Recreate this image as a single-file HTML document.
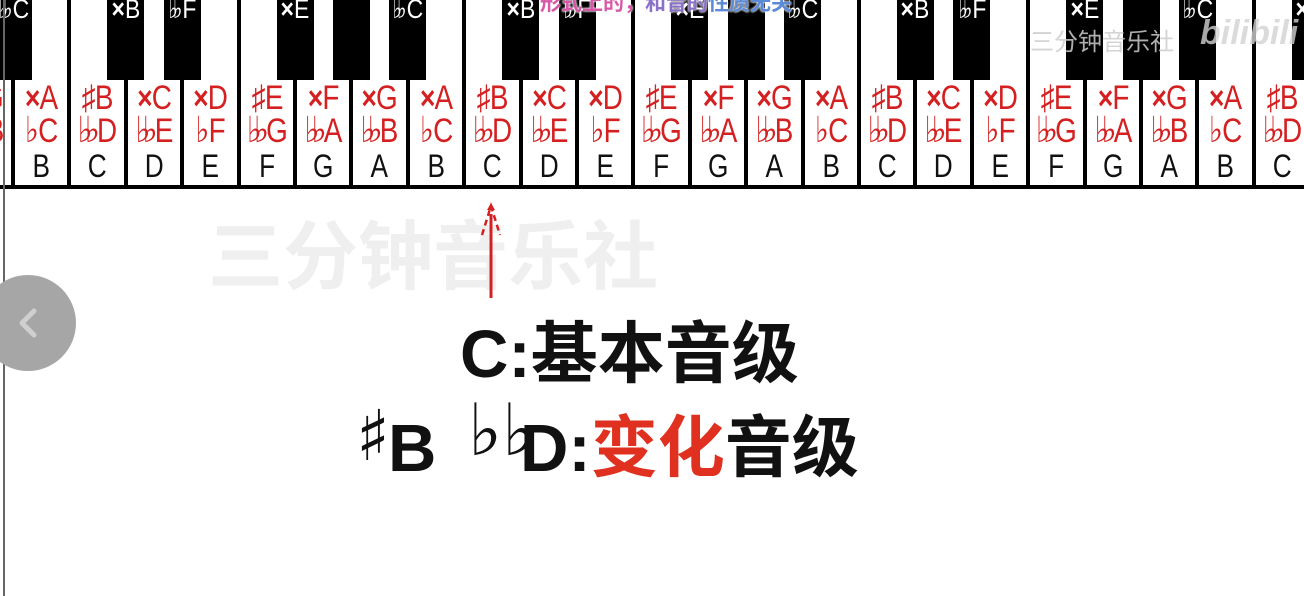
<!DOCTYPE html>
<html><head><meta charset="utf-8"><style>
*{margin:0;padding:0;box-sizing:border-box}
body{width:1304px;height:596px;overflow:hidden;background:#fff;position:relative;font-family:"Liberation Sans","Noto Sans CJK SC",sans-serif}
.d{position:absolute;top:0;height:188px;width:4px;background:#000}
.w{position:absolute;top:82px;width:56.4px;height:104px;text-align:center;color:#d42020}
.w .r{font-size:34px;line-height:33px;height:33px;transform:scaleX(.82);white-space:nowrap;letter-spacing:-1px}
.w .n{color:#111;font-size:32px;line-height:36px;transform:scaleX(.82)}
.x{font-weight:bold;font-size:32px}
.f{font-family:"DejaVu Sans",sans-serif;font-size:36px;letter-spacing:-9px;margin-right:7px;line-height:30px;display:inline-block;transform:scaleX(1.1)}
.f1{font-family:"DejaVu Sans",sans-serif;font-size:36px;line-height:30px}
.b{position:absolute;top:0;width:37px;height:80px;background:#000;color:#fff;font-size:27px;line-height:18px;text-align:center;overflow:hidden;white-space:nowrap}
.b span{display:inline-block;transform:scaleX(.85);margin-top:-4px}
.b .f{font-size:28px;letter-spacing:-7px;margin-right:5px;line-height:18px}
</style></head><body>
<div class="w" style="left:-43.4px"><div class="r"><span class="x">×</span>G</div><div class="r"><span class="f">♭♭</span>B</div><div class="n">A</div></div>
<div class="w" style="left:13px"><div class="r"><span class="x">×</span>A</div><div class="r"><span class="f1">♭</span>C</div><div class="n">B</div></div>
<div class="w" style="left:69.4px"><div class="r">♯B</div><div class="r"><span class="f">♭♭</span>D</div><div class="n">C</div></div>
<div class="w" style="left:125.8px"><div class="r"><span class="x">×</span>C</div><div class="r"><span class="f">♭♭</span>E</div><div class="n">D</div></div>
<div class="w" style="left:182.2px"><div class="r"><span class="x">×</span>D</div><div class="r"><span class="f1">♭</span>F</div><div class="n">E</div></div>
<div class="w" style="left:238.6px"><div class="r">♯E</div><div class="r"><span class="f">♭♭</span>G</div><div class="n">F</div></div>
<div class="w" style="left:295px"><div class="r"><span class="x">×</span>F</div><div class="r"><span class="f">♭♭</span>A</div><div class="n">G</div></div>
<div class="w" style="left:351.4px"><div class="r"><span class="x">×</span>G</div><div class="r"><span class="f">♭♭</span>B</div><div class="n">A</div></div>
<div class="w" style="left:407.8px"><div class="r"><span class="x">×</span>A</div><div class="r"><span class="f1">♭</span>C</div><div class="n">B</div></div>
<div class="w" style="left:464.2px"><div class="r">♯B</div><div class="r"><span class="f">♭♭</span>D</div><div class="n">C</div></div>
<div class="w" style="left:520.6px"><div class="r"><span class="x">×</span>C</div><div class="r"><span class="f">♭♭</span>E</div><div class="n">D</div></div>
<div class="w" style="left:577px"><div class="r"><span class="x">×</span>D</div><div class="r"><span class="f1">♭</span>F</div><div class="n">E</div></div>
<div class="w" style="left:633.4px"><div class="r">♯E</div><div class="r"><span class="f">♭♭</span>G</div><div class="n">F</div></div>
<div class="w" style="left:689.8px"><div class="r"><span class="x">×</span>F</div><div class="r"><span class="f">♭♭</span>A</div><div class="n">G</div></div>
<div class="w" style="left:746.2px"><div class="r"><span class="x">×</span>G</div><div class="r"><span class="f">♭♭</span>B</div><div class="n">A</div></div>
<div class="w" style="left:802.6px"><div class="r"><span class="x">×</span>A</div><div class="r"><span class="f1">♭</span>C</div><div class="n">B</div></div>
<div class="w" style="left:859px"><div class="r">♯B</div><div class="r"><span class="f">♭♭</span>D</div><div class="n">C</div></div>
<div class="w" style="left:915.4px"><div class="r"><span class="x">×</span>C</div><div class="r"><span class="f">♭♭</span>E</div><div class="n">D</div></div>
<div class="w" style="left:971.8px"><div class="r"><span class="x">×</span>D</div><div class="r"><span class="f1">♭</span>F</div><div class="n">E</div></div>
<div class="w" style="left:1028.2px"><div class="r">♯E</div><div class="r"><span class="f">♭♭</span>G</div><div class="n">F</div></div>
<div class="w" style="left:1084.6px"><div class="r"><span class="x">×</span>F</div><div class="r"><span class="f">♭♭</span>A</div><div class="n">G</div></div>
<div class="w" style="left:1141px"><div class="r"><span class="x">×</span>G</div><div class="r"><span class="f">♭♭</span>B</div><div class="n">A</div></div>
<div class="w" style="left:1197.4px"><div class="r"><span class="x">×</span>A</div><div class="r"><span class="f1">♭</span>C</div><div class="n">B</div></div>
<div class="w" style="left:1253.8px"><div class="r">♯B</div><div class="r"><span class="f">♭♭</span>D</div><div class="n">C</div></div>
<div class="d" style="left:11px"></div><div class="d" style="left:67.4px"></div><div class="d" style="left:123.8px"></div><div class="d" style="left:180.2px"></div><div class="d" style="left:236.6px"></div><div class="d" style="left:293px"></div><div class="d" style="left:349.4px"></div><div class="d" style="left:405.8px"></div><div class="d" style="left:462.2px"></div><div class="d" style="left:518.6px"></div><div class="d" style="left:575px"></div><div class="d" style="left:631.4px"></div><div class="d" style="left:687.8px"></div><div class="d" style="left:744.2px"></div><div class="d" style="left:800.6px"></div><div class="d" style="left:857px"></div><div class="d" style="left:913.4px"></div><div class="d" style="left:969.8px"></div><div class="d" style="left:1026.2px"></div><div class="d" style="left:1082.6px"></div><div class="d" style="left:1139px"></div><div class="d" style="left:1195.4px"></div><div class="d" style="left:1251.8px"></div>
<div style="position:absolute;left:0;top:185px;width:1304px;height:4px;background:#000"></div>
<div class="b" style="left:-5.5px"><span><span class="f">♭♭</span>C</span></div>
<div class="b" style="left:107.3px"><span><b>×</b>B</span></div>
<div class="b" style="left:163.7px"><span><span class="f">♭♭</span>F</span></div>
<div class="b" style="left:276.5px"><span><b>×</b>E</span></div>
<div class="b" style="left:332.9px"></div>
<div class="b" style="left:389.3px"><span><span class="f">♭♭</span>C</span></div>
<div class="b" style="left:502.1px"><span><b>×</b>B</span></div>
<div class="b" style="left:558.5px"><span><span class="f">♭♭</span>F</span></div>
<div class="b" style="left:671.3px"><span><b>×</b>E</span></div>
<div class="b" style="left:727.7px"></div>
<div class="b" style="left:784.1px"><span><span class="f">♭♭</span>C</span></div>
<div class="b" style="left:896.9px"><span><b>×</b>B</span></div>
<div class="b" style="left:953.3px"><span><span class="f">♭♭</span>F</span></div>
<div class="b" style="left:1066.1px"><span><b>×</b>E</span></div>
<div class="b" style="left:1122.5px"></div>
<div class="b" style="left:1178.9px"><span><span class="f">♭♭</span>C</span></div>
<div class="b" style="left:1291.5px"><span><b>×</b>B</span></div>
<div style="position:absolute;left:540px;top:-13px;font-size:21px;font-weight:bold;white-space:nowrap;text-shadow:0 0 2px #fff,0 0 2px #fff"><span style="color:#d858a8">形式上的，</span><span style="color:#8a70c8">和音的</span><span style="color:#5a8ad8">性质无关</span></div>
<div style="position:absolute;left:1030px;top:22px;font-size:24px;color:rgba(205,205,205,.85);white-space:nowrap">三分钟音乐社</div>
<div style="position:absolute;left:1200px;top:14px;font-size:34px;font-weight:bold;color:rgba(210,210,210,.8);font-style:italic">bilibili</div>
<div style="position:absolute;left:3px;top:0;width:2px;height:596px;background:#666"></div>
<div style="position:absolute;left:208px;top:196px;font-size:75px;font-weight:bold;color:#efefef;white-space:nowrap">三分钟音乐社</div>
<svg style="position:absolute;left:470px;top:200px" width="40" height="102"><line x1="21" y1="14" x2="21" y2="98" stroke="#d42020" stroke-width="3"/><path d="M12 35 L21 6 L30 35" fill="none" stroke="#d42020" stroke-width="2.5" stroke-dasharray="6,4"/><path d="M17 10 L21 3 L25 10Z" fill="#d42020"/></svg>
<div style="position:absolute;left:-20px;top:275px;width:96px;height:96px;border-radius:50%;background:#a6a6a6"></div>
<svg style="position:absolute;left:14px;top:305px" width="30" height="36"><path d="M20 6 L8 18 L20 30" fill="none" stroke="#cfcfcf" stroke-width="5" stroke-linecap="round" stroke-linejoin="round"/></svg>
<div style="position:absolute;left:460px;top:318px;font-size:67px;font-weight:bold;color:#111;white-space:nowrap;line-height:74px">C:基本音级</div>
<div style="position:absolute;left:356px;top:396px;font-family:'DejaVu Sans';font-size:70px;color:#111;line-height:80px">♯</div>
<div style="position:absolute;left:388px;top:412px;font-size:67px;font-weight:bold;color:#111;line-height:74px">B</div>
<div style="position:absolute;left:468px;top:390px;font-family:'DejaVu Sans';font-size:72px;color:#111;line-height:80px">♭♭</div>
<div style="position:absolute;left:520px;top:412px;font-size:67px;font-weight:bold;color:#111;white-space:nowrap;line-height:74px">D:<span style="color:#e03020">变化</span>音级</div>
</body></html>
